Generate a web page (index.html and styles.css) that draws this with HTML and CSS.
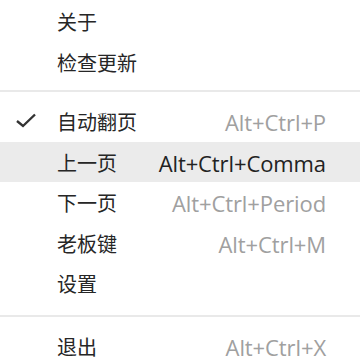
FILE: index.html
```html
<!DOCTYPE html>
<html lang="zh-CN">
<head>
<meta charset="utf-8">
<link rel="stylesheet" href="styles.css">
</head>
<body>
<div class="menu">
  <div class="item"><span class="check"></span><span class="label">关于</span><span class="key"></span></div>
  <div class="item"><span class="check"></span><span class="label">检查更新</span><span class="key"></span></div>
  <div class="sep"></div>
  <div class="item"><span class="check"><svg width="22" height="15" viewBox="0 0 22 15"><path d="M2 8 L8 13 L20 1.5" fill="none" stroke="#333" stroke-width="2.4"/></svg></span><span class="label">自动翻页</span><span class="key">Alt+Ctrl+P</span></div>
  <div class="item active"><span class="check"></span><span class="label">上一页</span><span class="key">Alt+Ctrl+Comma</span></div>
  <div class="item"><span class="check"></span><span class="label">下一页</span><span class="key">Alt+Ctrl+Period</span></div>
  <div class="item"><span class="check"></span><span class="label">老板键</span><span class="key">Alt+Ctrl+M</span></div>
  <div class="item"><span class="check"></span><span class="label">设置</span><span class="key"></span></div>
  <div class="sep sep2"></div>
  <div class="item"><span class="check"></span><span class="label">退出</span><span class="key">Alt+Ctrl+X</span></div>
</div>
</body>
</html>
```
FILE: styles.css
```css
html, body {
  margin: 0;
  padding: 0;
  background: #ffffff;
  overflow: hidden;
}
body {
  width: 360px;
  height: 360px;
  font-family: "Open Sans", "Noto Sans CJK SC", sans-serif;
  color: #222222;
}
.menu {
  padding-top: 1px;
  display: flex;
  flex-direction: column;
}
.item {
  height: 40.5px;
  display: flex;
  align-items: center;
  padding-top: 2px;
  box-sizing: border-box;
  line-height: 1;
}
.item.active {
  background: #ebebeb;
}
.check {
  width: 57px;
  padding-left: 15px;
  box-sizing: border-box;
  display: flex;
  align-items: center;
}
.check svg {
  display: block;
  margin-top: -3px;
}
.label {
  flex: 1;
  font-family: "Noto Sans CJK SC", sans-serif;
  font-size: 20px;
  color: #262626;
}
.key {
  padding-right: 34px;
  color: #a0a0a0;
  font-size: 22px;
  letter-spacing: -0.1px;
}
.active .key {
  color: #222222;
}
.sep {
  height: 2px;
  background: #e9e9e9;
  margin: 8px 0 9px;
}
.sep2 {
  margin: 11px 0 9px;
}
```
